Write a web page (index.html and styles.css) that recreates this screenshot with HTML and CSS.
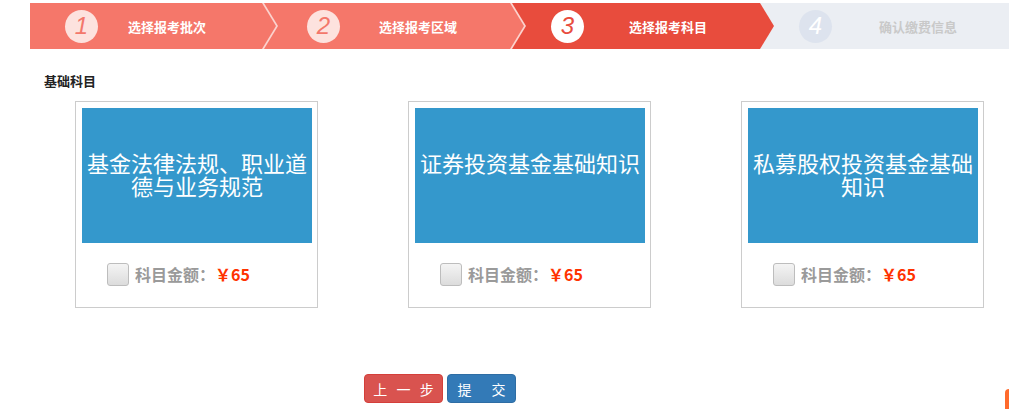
FILE: index.html
```html
<!DOCTYPE html>
<html lang="zh-CN">
<head>
<meta charset="utf-8">
<title>选择报考科目</title>
<link rel="stylesheet" href="styles.css">
</head>
<body>
<div class="steps">
  <div class="step step-done step-first">
    <span class="num">1</span><span class="label">选择报考批次</span>
  </div>
  <div class="step step-done">
    <span class="num">2</span><span class="label">选择报考区域</span>
  </div>
  <div class="step step-current">
    <span class="num">3</span><span class="label">选择报考科目</span>
  </div>
  <div class="step step-todo step-last">
    <span class="num">4</span><span class="label">确认缴费信息</span>
  </div>
</div>

<div class="section-title">基础科目</div>

<div class="cards">
  <div class="card">
    <div class="card-cover">基金法律法规、职业道德与业务规范</div>
    <div class="card-foot">
      <span class="check"></span>
      <span class="price-label">科目金额：</span><span class="price">￥65</span>
    </div>
  </div>
  <div class="card">
    <div class="card-cover">证券投资基金基础知识</div>
    <div class="card-foot">
      <span class="check"></span>
      <span class="price-label">科目金额：</span><span class="price">￥65</span>
    </div>
  </div>
  <div class="card">
    <div class="card-cover">私募股权投资基金基础知识</div>
    <div class="card-foot">
      <span class="check"></span>
      <span class="price-label">科目金额：</span><span class="price">￥65</span>
    </div>
  </div>
</div>

<div class="actions">
  <button class="btn btn-prev">上 一 步</button>
  <button class="btn btn-submit">提　交</button>
</div>

<div class="float-tab"></div>
</body>
</html>
```

FILE: styles.css
```css
html, body {
  margin: 0;
  padding: 0;
  overflow: hidden;
}
body {
  position: relative;
  height: 409px;
  font-family: "Noto Sans CJK SC", "Liberation Sans", sans-serif;
  background: #fff;
  color: #333;
}

/* ---------- steps ---------- */
.steps {
  display: flex;
  margin: 3px 0 0 30px;
  height: 46px;
  overflow: hidden;
}
.step {
  position: relative;
  flex: 0 0 262px;
  width: 262px;
  margin-left: -14px;
  padding-left: 14px;
  box-sizing: border-box;
  display: flex;
  align-items: center;
  background: #fbd3ce;
  clip-path: polygon(0 0, calc(100% - 14px) 0, 100% 50%, calc(100% - 14px) 100%, 0 100%);
}
.step::before {
  content: "";
  position: absolute;
  top: 0;
  bottom: 0;
  left: 0;
  right: 2px;
  clip-path: polygon(0 0, calc(100% - 14px) 0, 100% 50%, calc(100% - 14px) 100%, 0 100%);
  z-index: 0;
}
.step-first {
  flex-basis: 248px;
  width: 248px;
  margin-left: 0;
  padding-left: 0;
  z-index: 4;
}
.step-done { z-index: 3; }
.step-first.step-done { z-index: 4; }
.step-current { z-index: 2; background: #e84c3d; }
.step-last {
  flex: 1 1 auto;
  z-index: 1;
  clip-path: none;
  background: #ebeef3;
}
.step-done::before { background: #f5776a; }
.step-current::before { background: #e84c3d; }
.step-last::before { background: #ebeef3; right: 0; clip-path: none; }

.num {
  position: relative;
  z-index: 1;
  width: 33px;
  height: 33px;
  border-radius: 50%;
  margin-left: 29px;
  display: flex;
  align-items: center;
  justify-content: center;
  font-family: "Liberation Sans", sans-serif;
  font-style: italic;
  font-size: 24px;
  line-height: 1;
  flex: none;
}
.step-first .num { margin-left: 35px; }
.step-current .num,
.step-last .num { margin-left: 25px; }
.label {
  position: relative;
  z-index: 1;
  margin-left: 39px;
  font-size: 13px;
  font-weight: bold;
  color: #fff;
  white-space: nowrap;
}
.step-first .label { margin-left: 30px; }
.step-current .label { margin-left: 45px; }
.step-last .label { margin-left: 47px; color: #c9c9c9; }

.step-done .num { background: #fde2de; color: #f3776b; }
.step-current .num { background: #fff; color: #e84c3d; }
.step-last .num { background: #dde3ee; color: #fff; }

/* ---------- section title ---------- */
.section-title {
  margin: 23px 0 0 44px;
  font-size: 13px;
  font-weight: bold;
  line-height: 18px;
  color: #222;
}

/* ---------- cards ---------- */
.cards {
  display: flex;
  gap: 90px;
  margin: 11px 0 0 75px;
}
.card {
  width: 243px;
  height: 207px;
  box-sizing: border-box;
  border: 1px solid #cccccc;
  padding: 6px 5px 0 6px;
}
.card-cover {
  height: 135px;
  box-sizing: border-box;
  background: #3498cc;
  color: #fff;
  font-size: 22px;
  line-height: 23px;
  text-align: center;
  padding-top: 43px;
}
.card-foot {
  display: flex;
  align-items: center;
  margin: 19px 0 0 25px;
  height: 24px;
}
.check {
  width: 20px;
  height: 21px;
  border: 1px solid #bdbdbd;
  border-radius: 3px;
  background: linear-gradient(#f4f4f4, #dcdcdc);
  margin-right: 6px;
  flex: none;
}
.price-label {
  font-size: 16px;
  font-weight: bold;
  color: #9a9a9a;
}
.price {
  font-family: "Noto Sans CJK SC", "Open Sans", sans-serif;
  font-size: 16px;
  font-weight: bold;
  color: #ff3300;
  margin-left: 0;
}

/* ---------- buttons ---------- */
.actions {
  display: flex;
  gap: 4px;
  margin: 66px 0 0 364px;
}
.btn {
  height: 29px;
  border: 1px solid transparent;
  border-radius: 4px;
  color: #fff;
  font-family: "Noto Sans CJK SC", sans-serif;
  font-size: 14px;
  padding: 0;
  cursor: pointer;
}
.btn-prev {
  width: 79px;
  background: #d9534f;
  border-color: #d43f3a;
  letter-spacing: 3px;
  padding-left: 3px;
}
.btn-submit {
  width: 69px;
  background: #337ab7;
  border-color: #2e6da4;
  letter-spacing: 3px;
  padding-left: 3px;
}

.float-tab {
  position: absolute;
  right: 0;
  top: 389px;
  width: 4px;
  height: 20px;
  background: #ff6a2c;
  border-top-left-radius: 4px;
}
```
